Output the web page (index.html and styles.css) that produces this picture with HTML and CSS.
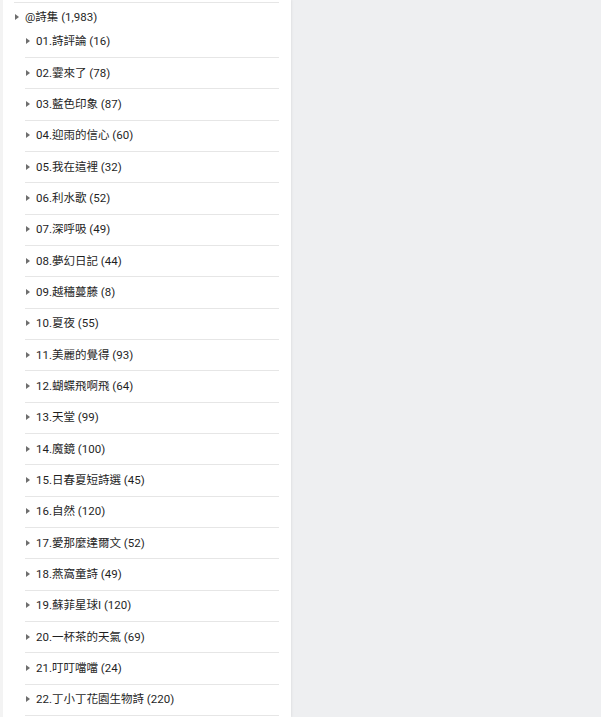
FILE: index.html
```html
<!DOCTYPE html>
<html lang="zh-Hant">
<head>
    <meta charset="UTF-8">
    <meta name="viewport" content="width=device-width, initial-scale=1.0">
    <title>詩集</title>
    <link rel="stylesheet" href="styles.css">
</head>
<body>
    <div class="panel">
        <div class="tree">
            <div class="top-line"></div>
            <div class="root">
                <span class="arrow"></span>
                <span class="name">@詩集 (1,983)</span>
            </div>
            <div class="children">
                <div class="item"><span class="arrow"></span><span class="name">01.詩評論 (16)</span></div>
                <div class="item"><span class="arrow"></span><span class="name">02.霎來了 (78)</span></div>
                <div class="item"><span class="arrow"></span><span class="name">03.藍色印象 (87)</span></div>
                <div class="item"><span class="arrow"></span><span class="name">04.迎雨的信心 (60)</span></div>
                <div class="item"><span class="arrow"></span><span class="name">05.我在這裡 (32)</span></div>
                <div class="item"><span class="arrow"></span><span class="name">06.利水歌 (52)</span></div>
                <div class="item"><span class="arrow"></span><span class="name">07.深呼吸 (49)</span></div>
                <div class="item"><span class="arrow"></span><span class="name">08.夢幻日記 (44)</span></div>
                <div class="item"><span class="arrow"></span><span class="name">09.越穡蔓藤 (8)</span></div>
                <div class="item"><span class="arrow"></span><span class="name">10.夏夜 (55)</span></div>
                <div class="item"><span class="arrow"></span><span class="name">11.美麗的覺得 (93)</span></div>
                <div class="item"><span class="arrow"></span><span class="name">12.蝴蝶飛啊飛 (64)</span></div>
                <div class="item"><span class="arrow"></span><span class="name">13.天堂 (99)</span></div>
                <div class="item"><span class="arrow"></span><span class="name">14.魔鏡 (100)</span></div>
                <div class="item"><span class="arrow"></span><span class="name">15.日春夏短詩選 (45)</span></div>
                <div class="item"><span class="arrow"></span><span class="name">16.自然 (120)</span></div>
                <div class="item"><span class="arrow"></span><span class="name">17.愛那麼達爾文 (52)</span></div>
                <div class="item"><span class="arrow"></span><span class="name">18.燕窩童詩 (49)</span></div>
                <div class="item"><span class="arrow"></span><span class="name">19.蘇菲星球I (120)</span></div>
                <div class="item"><span class="arrow"></span><span class="name">20.一杯茶的天氣 (69)</span></div>
                <div class="item"><span class="arrow"></span><span class="name">21.叮叮噹噹 (24)</span></div>
                <div class="item"><span class="arrow"></span><span class="name">22.丁小丁花園生物詩 (220)</span></div>
            </div>
        </div>
    </div>
    <div class="side"></div>
</body>
</html>
```

FILE: styles.css
```css
* {
    margin: 0;
    padding: 0;
    box-sizing: border-box;
}
body {
    height: 100vh;
    display: flex;
    overflow: hidden;
    background-color: #eeeff1;
    font-family: Roboto, "Noto Sans CJK TC", sans-serif;
    font-size: 11.5px;
    color: #1f1f1f;
}
.panel {
    width: 291px;
    height: 100vh;
    overflow: hidden;
    background-color: #fff;
    border-left: 3px solid #f3f3f3;
    box-shadow: 1px 0 2px rgba(0, 0, 0, 0.06);
}
.tree {
    margin-left: 11px;
    width: 265px;
}
.top-line {
    height: 3px;
    border-bottom: 1px solid #e6e6e6;
}
.root {
    height: 23.667px;
    padding-top: 6px;
    padding-left: 1px;
    display: flex;
    align-items: flex-start;
    line-height: 16px;
}
.root .arrow {
    margin-top: 5px;
}
.children {
    margin-left: 11px;
}
.item {
    height: 31.333px;
    padding-left: 1px;
    padding-bottom: 1px;
    display: flex;
    align-items: center;
    border-bottom: 1px solid #e6e6e6;
    line-height: 16px;
}
.arrow {
    width: 0;
    height: 0;
    border-left: 4px solid #6e6e6e;
    border-top: 3.5px solid transparent;
    border-bottom: 3.5px solid transparent;
    margin-right: 6px;
    flex-shrink: 0;
}
.name {
    white-space: nowrap;
}
```
